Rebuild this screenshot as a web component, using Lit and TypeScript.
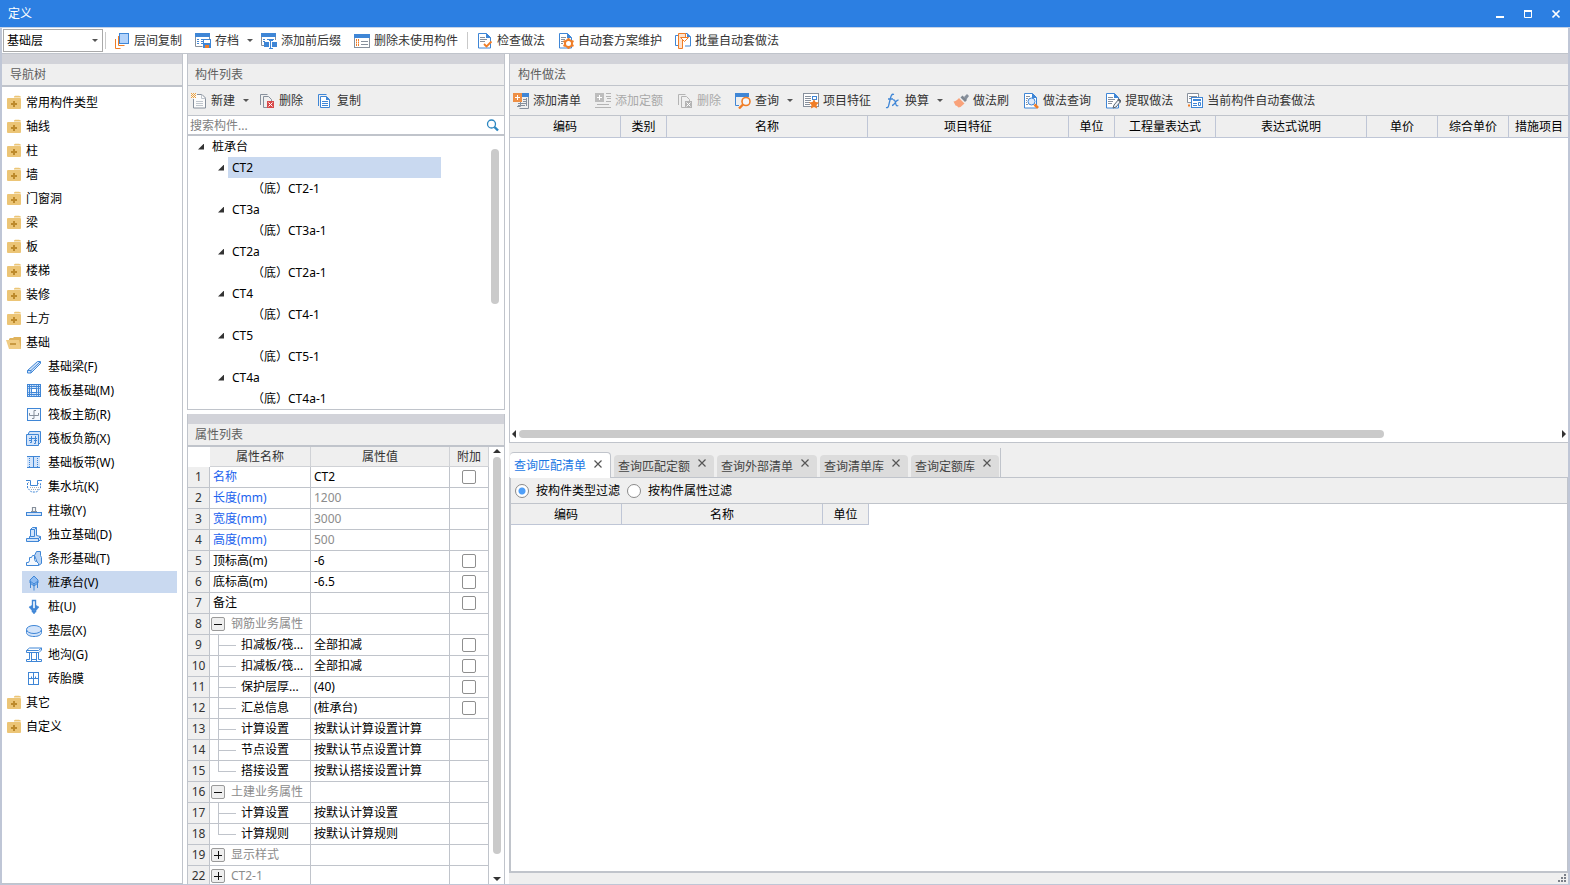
import { LitElement, html, css, svg, nothing, SVGTemplateResult } from "lit";
import { customElement, property, state } from "lit/decorators.js";
import { classMap } from "lit/directives/class-map.js";

const B = "#3f86d6";
const L = "#d3e4fa";
const O = "#f07d26";
const G = "#87909c";

const page = svg`<path d="M1.5 .5h8l4 4v10.500h-12z" fill="#fff" stroke=${B}/><path d="M9 0l5 5h-5z" fill=${B}/>`;

const ICONS: Record<string, SVGTemplateResult> = {
  layers: svg`<path d="M1.500 6v9.500h5M4.500 3v9.500h6" fill="none" stroke=${O}/><rect x="5.500" y="0.500" width="9" height="10" fill="#b3d3fb" stroke=${B}/>`,
  archive: svg`<path d="M.5 1v12.500h7M14.500 1v5" fill="none" stroke=${G}/><rect x="0" y="0" width="15" height="4" fill=${B}/><path d="M2 6.500h2M6 6.500h7M2 8.500h2M6 8.500h2M2 10.500h2M6 10.500h2" stroke=${B}/><rect x="8" y="6" width="8" height="9" fill=${B}/><rect x="9" y="7" width="6" height="3" fill="#fff"/><rect x="10" y="12" width="4" height="3" fill=${O}/>`,
  affix: svg`<path d="M.5 1v11.500h3M14.500 1v6" fill="none" stroke=${G}/><rect x="0" y="0" width="15" height="4" fill=${B}/><path d="M2 6.500h2M6 6.500h7M2 8.500h2" stroke=${B}/><rect x="3" y="9" width="5" height="5" fill=${B}/><rect x="11" y="9" width="5" height="5" fill=${B}/><path d="M8 7.500h4M9.500 7v8M8 15.500h4" stroke=${B}/>`,
  unused: svg`<rect x=".5" y="1.500" width="15" height="13" fill="#fff" stroke=${G}/><rect x="0" y="1" width="16" height="4" fill=${B}/><path d="M2 7h3M2 9.500h3M2 12h3" stroke=${O} stroke-dasharray="1 1" stroke-width="2"/><path d="M7 8.500h7M7 11.500h7" stroke=${G}/>`,
  check: svg`${page}<path d="M3 4.500h5M3 6.500h7M3 8.500h5" stroke=${G}/><path d="M7 11l2.500 2.500 5-5" fill="none" stroke=${O} stroke-width="1.800"/>`,
  plan: svg`${page}<path d="M3 4.500h5M3 6.500h4M3 8.500h3M3 10.500h2" stroke=${G}/><circle cx="10.500" cy="10.500" r="3.500" fill="#fff" stroke=${O} stroke-width="2"/><path d="M10.500 5v2M10.500 14v2M5.500 8l2 1M13.500 12l2 1M15.500 8l-2 1M7.500 12l-2 1" stroke=${O} stroke-width="2"/>`,
  batch: svg`<path d="M3 2.500H.5v10H3M8 .5h4l3.500 3.500v9H10" fill="#fff" stroke=${B}/><path d="M12 0l4 4h-4z" fill=${B}/><path d="M3.500 15.500V.5h7v4h-3v11z" fill="#fde3cf" stroke=${O}/><path d="M5.500 4.500h8l-4 4z" fill="#fff" stroke=${O}/>`,
  create: svg`<path d="M6 1.500h5l3.500 3.500v10h-12V6" fill="#fbfbfb" stroke=${G}/><path d="M10.500 1.500v4h4M5 8.500h7M5 10.500h7M5 12.500h7" fill="none" stroke="#bfc5cc"/><path d="M0 .5h5M0 2.500h5M0 4.500h5" stroke="#f0a13a" stroke-dasharray="1 1"/><path d="M1 1.500h4M1 3.500h4" stroke="#f0a13a" stroke-dasharray="1 1"/>`,
  remove: svg`<path d="M1.500 12V1.500h7M4.500 14.500v-11h5l3 3V8M4.500 14.500H8" fill="none" stroke=${G}/><rect x="8" y="8" width="7" height="7" fill="#d84a4a"/><path d="M9.500 9.500l4 4M13.500 9.500l-4 4" stroke="#fff"/>`,
  removeOff: svg`<path d="M1.500 12V1.500h7M4.500 14.500v-11h5l3 3V8M4.500 14.500H8" fill="none" stroke="#b4b4b4"/><rect x="8" y="8" width="7" height="7" fill="#b4b4b4"/><path d="M9.500 9.500l4 4M13.500 9.500l-4 4" stroke="#fff"/>`,
  copy: svg`<path d="M1.500 13V1.500h8" fill="none" stroke=${B}/><path d="M3.500 3.500h6l3 3v8h-9z" fill="#fff" stroke=${B}/><path d="M9 3l4 4h-4zM5 8h6v1H5zM5 10h6v1H5zM5 12h6v1H5z" fill=${B}/>`,
  addList: svg`<path d="M7.500 2v11.500H4M15.500 4v11.500H6.500" fill="none" stroke=${G}/><rect x="9" y="0" width="7" height="4" fill=${B}/><path d="M10 6.500h4M10 8.500h4M5 10.500h9M5 12.500h7" stroke=${G}/><path d="M13.500 5v8" stroke=${G}/><rect x="0" y="0" width="9" height="9" fill="#ee8f45"/><path d="M4.500 2v5M2 4.500h5" stroke="#fff"/>`,
  addQuota: svg`<rect x="0" y="0" width="9" height="9" fill="#bdbdbd"/><path d="M4.500 2v5M2 4.500h5" stroke="#fff"/><path d="M11 .5h5M11 3.500h5M12 5.500h4M11 8.500h5M2 11.500h12M0 14.500h16" stroke="#b4b4b4"/>`,
  query: svg`<path d="M.5 3v9.500H4" fill="none" stroke=${B}/><rect x="0" y="0" width="14" height="4" fill=${B}/><circle cx="11" cy="8.500" r="4" fill="#f5f8fc" stroke=${O} stroke-width="1.600"/><path d="M8 11.500L4 15.500" stroke=${O} stroke-width="2.400"/>`,
  feature: svg`<rect x=".5" y=".5" width="15" height="13" fill="#fff" stroke=${G}/><path d="M2 3.500h6M2 5.500h6M2 7.500h6M2 9.500h5M2 11.500h5" stroke=${G}/><rect x="9.500" y="3.500" width="4" height="3" fill="none" stroke=${B}/><path d="M11 6l1.500 3 3.500.5-2.500 2.500.6 3.500L11 14l-3.100 1.500.6-3.500L6 9.500 9.500 9z" fill=${O}/>`,
  fx: svg`<path d="M9 1.500C6.500.5 6 3 5.500 5L3.800 12C3.400 14.500 2.300 15 1 14.500M3 6h5M8 7c2-.5 2 1 2.500 3s.8 3.500 2.800 2.500M13.500 7c-2 0-2.500 1.500-3.500 3s-1.500 2.500-3 2.500" fill="none" stroke=${B} stroke-width="1.300"/>`,
  brush: svg`<path d="M11 4l3-3 2 2-3 4z" fill=${G}/><path d="M7.500 4.500l2-2 4.500 4.500-2 2z" fill="#7f8791"/><path d="M6 5l5.500 5.500-4 3.500-2 .500-1.500-1.500-1.500-.5-2-4c2 0 3.500-1.500 5.500-3.500z" fill="#f9a27a"/>`,
  methodQuery: svg`${page}<path d="M3 3.500h4M3 5.500h2M3 7.500h1M3 9.500h1M3 11.500h2" stroke=${G}/><circle cx="8.500" cy="8.500" r="3.500" fill="#dceafb" stroke=${B}/><path d="M11.500 11.500l3.500 3.500" stroke=${O} stroke-width="2.600"/>`,
  extract: svg`${page}<path d="M3 4.500h5M3 6.500h7M3 8.500h5M3 10.500h4" stroke=${G}/><path d="M8 15l1-3 5-6 2 2-5 6z" fill="#eef3f8" stroke="#5c6671"/><path d="M13 6l3 3" stroke="#5c6671" stroke-width="2"/>`,
  current: svg`<path d="M4 9.500H.5v-9h11V4" fill="#fff" stroke=${G}/><path d="M2 3.500h8M2 5.500h2" stroke=${G}/><rect x="4.500" y="4.500" width="11" height="10" fill="#fff" stroke=${B}/><path d="M6 7h8" stroke=${B} stroke-width="2"/><path d="M6 10.500h4M6 12.500h4M11.500 9.500h2v3h-2z" fill="none" stroke=${B}/><path d="M2 11v3M1 12.500h2" stroke=${O}/>`,
  folder: svg`<path d="M8 2.500V1.500L9 .8h4l1.800.7v1z" fill="#ecc576"/><rect x="1" y="3" width="14" height="11" rx="1" fill="#ecc576"/><path d="M8 6v6M5 9h6" stroke="#bd8a2c" stroke-width="2"/>`,
  folderOpen: svg`<path d="M3 13V4l1-1h3l1-1h7v12z" fill="#e0b35c"/><path d="M0 5h13l2 9H3z" fill="#f0cc83"/><path d="M4 9h6" stroke="#bd8a2c" stroke-width="1.500"/>`,
  beam: svg`<path d="M1.500 11.500l10-9h3v2L5 14H1.500z" fill=${L} stroke=${B}/><path d="M1.500 11.500h3.500v2.500M5 11.500l9-8.500" fill="none" stroke=${B}/>`,
  raft: svg`<rect x="1.500" y="1.500" width="13" height="12" fill=${L} stroke=${B}/><rect x="5.500" y="5.500" width="5" height="4" fill="#fff" stroke=${B}/><path d="M3.500 2v11M12.500 2v11M2 3.500h12M2 11.500h12" stroke=${B}/><path d="M5.500 2v3M8 2v2M10.500 2v3M5.500 10v3M8 11v2M10.500 10v3M2 5.500h3M2 9.500h3M11 5.500h3M11 9.500h3" stroke=${B} opacity=".7"/>`,
  raftMain: svg`<rect x="1.500" y="1.500" width="13" height="12" fill="#f4f8fd" stroke=${B}/><path d="M3.500 6v2.500h9V6M10 3.500H8V11.500H6" fill="none" stroke=${G}/>`,
  raftNeg: svg`<path d="M.5 3.500h12v11h-12zM2 3.500l1.500-3h11v11l-2 2" fill=${L} stroke=${B}/><path d="M5.500 5v6.500H4M9.500 5v7.500H8M3 7.500h8M3 9.500h3M8 9.500h3" fill="none" stroke=${B}/>`,
  strip: svg`<rect x="1" y="2" width="13" height="10" fill=${L}/><path d="M1 1.500h5M1 12.500h5M9 1.500h5M9 12.500h5M7.500 2v10M6 1.500h3M6 12.500h3" stroke=${B}/><path d="M3.500 3v9M11.500 3v9" stroke=${B} stroke-dasharray="1 1"/>`,
  pit: svg`<path d="M0 1.500h4.500v5h7v-5H16" fill="none" stroke=${B}/><path d="M1.500 4v5l4 4h5l4-4V4" fill="none" stroke=${B} stroke-dasharray="2 1"/><path d="M2 3.500h2M12 4.500h2M4 8.500h9M5 10.500h7" stroke="#aab1ba" stroke-dasharray="1 1"/>`,
  pier: svg`<path d="M6.500 8v-3.500h3V8M5 8.500h6" fill="none" stroke=${G} stroke-width="1.200"/><rect x=".5" y="9.500" width="15" height="3" fill=${L} stroke=${B}/>`,
  footing: svg`<path d="M.5 11.500h12v3H.5zM3.500 11.500v-2h1v-7l2-2h4v8l4 1v3l-2 2v-3z" fill=${L} stroke=${B}/><path d="M4.500 9.500v-7h4v7zM8.500 2.500l2-2M12.500 11.500l2-2" fill="none" stroke=${B}/>`,
  stripFooting: svg`<path d="M8.500 4.500l2-4h4v4l1 2v6l-3 2z" fill="#b9d3f3" stroke=${B}/><path d="M.5 14.500v-3h2l1-2v-3h2l1-2h2v4l1 2h1l2 2v2z" fill="#f4f8fd" stroke=${B}/>`,
  pileCap: svg`<path d="M8 1l4 4v3l-4 3-4-3V5z" fill="#8fbcf2" stroke=${B}/><path d="M8 8v7.500M4.500 7v6M11.500 7v6M4 6l4 3 4-3" fill="none" stroke=${B}/>`,
  pile: svg`<path d="M6.500 1.500h3v11h-3z" fill="#fff" stroke=${B} stroke-width="1.400"/><path d="M3 8l3-1.500v3h4v-3L13 8l-3 3.500h-4zM6 12h4l-2 3z" fill=${B} stroke=${B} stroke-width=".6"/>`,
  cushion: svg`<path d="M.5 6.500v3c0 2.500 3.500 4 7.500 4s7.500-1.500 7.500-4v-3" fill=${L} stroke=${B}/><ellipse cx="8" cy="6.500" rx="7.500" ry="4" fill=${L} stroke=${B}/>`,
  trench: svg`<path d="M.5 5.500v-2l3-2.500h12v2l-2.500 2.500zM.5 3.500h12l3-2.500" fill="#fff" stroke=${B}/><path d="M3.500 5.500v7h-3v2h5v-9M10.500 5.500v9h5v-2h-3v-7M5 12.500h6M5 14.500h6" fill="none" stroke=${B}/>`,
  brick: svg`<rect x="2.500" y="1.500" width="10" height="12" fill="#fff" stroke=${B}/><path d="M7.500 2v11M3 7.500h9" stroke=${B}/><path d="M5.500 7V5.500M9.500 7V5.500" stroke=${B}/>`,
  search: svg`<circle cx="6.500" cy="7" r="4" fill="none" stroke="#2b86c0" stroke-width="1.300"/><path d="M9.500 10l3.500 3.500" stroke="#2b86c0" stroke-width="2.400"/>`,
  minimize: svg`<path d="M4 11h8" stroke="#fff" stroke-width="2"/>`,
  maximize: svg`<path d="M4.500 5v6.500h7V5" fill="none" stroke="#fff"/><path d="M4 5h8" stroke="#fff" stroke-width="2"/>`,
  close: svg`<path d="M4.500 4.500l7 7M11.500 4.500l-7 7" stroke="#fff" stroke-width="1.700"/>`,
};

@customElement("ui-icon")
class UiIcon extends LitElement {
  @property() name = "";
  static styles = css`
    :host { display: block; flex: none; width: 16px; height: 16px; }
    svg { display: block; width: 16px; height: 16px; }
  `;
  render() {
    return html`<svg viewBox="0 0 16 16" aria-hidden="true">${ICONS[this.name]}</svg>`;
  }
}

type Tool = { icon: string; text: string; menu?: boolean; off?: boolean; sep?: boolean };

const MAIN_TOOLS: Tool[] = [
  { icon: "layers", text: "层间复制" },
  { icon: "archive", text: "存档", menu: true },
  { icon: "affix", text: "添加前后缀" },
  { icon: "unused", text: "删除未使用构件" },
  { icon: "check", text: "检查做法", sep: true },
  { icon: "plan", text: "自动套方案维护" },
  { icon: "batch", text: "批量自动套做法" },
];
const LIST_TOOLS: Tool[] = [
  { icon: "create", text: "新建", menu: true },
  { icon: "remove", text: "删除" },
  { icon: "copy", text: "复制" },
];
const METHOD_TOOLS: Tool[] = [
  { icon: "addList", text: "添加清单" },
  { icon: "addQuota", text: "添加定额", off: true },
  { icon: "removeOff", text: "删除", off: true },
  { icon: "query", text: "查询", menu: true },
  { icon: "feature", text: "项目特征" },
  { icon: "fx", text: "换算", menu: true },
  { icon: "brush", text: "做法刷" },
  { icon: "methodQuery", text: "做法查询" },
  { icon: "extract", text: "提取做法" },
  { icon: "current", text: "当前构件自动套做法" },
];

const NAV_TOP = ["常用构件类型", "轴线", "柱", "墙", "门窗洞", "梁", "板", "楼梯", "装修", "土方"];
const NAV_SUB: [string, string][] = [
  ["beam", "基础梁(F)"],
  ["raft", "筏板基础(M)"],
  ["raftMain", "筏板主筋(R)"],
  ["raftNeg", "筏板负筋(X)"],
  ["strip", "基础板带(W)"],
  ["pit", "集水坑(K)"],
  ["pier", "柱墩(Y)"],
  ["footing", "独立基础(D)"],
  ["stripFooting", "条形基础(T)"],
  ["pileCap", "桩承台(V)"],
  ["pile", "桩(U)"],
  ["cushion", "垫层(X)"],
  ["trench", "地沟(G)"],
  ["brick", "砖胎膜"],
];

const PARTS = ["CT2", "CT3a", "CT2a", "CT4", "CT5", "CT4a"];

type Prop = { n: number; name: string; value?: string; kind?: "key" | "open" | "shut" | "child" | "last"; check?: boolean; dim?: boolean };
const PROPS: Prop[] = [
  { n: 1, name: "名称", value: "CT2", kind: "key", check: true },
  { n: 2, name: "长度(mm)", value: "1200", kind: "key", dim: true },
  { n: 3, name: "宽度(mm)", value: "3000", kind: "key", dim: true },
  { n: 4, name: "高度(mm)", value: "500", kind: "key", dim: true },
  { n: 5, name: "顶标高(m)", value: "-6", check: true },
  { n: 6, name: "底标高(m)", value: "-6.5", check: true },
  { n: 7, name: "备注", check: true },
  { n: 8, name: "钢筋业务属性", kind: "open" },
  { n: 9, name: "扣减板/筏...", value: "全部扣减", kind: "child", check: true },
  { n: 10, name: "扣减板/筏...", value: "全部扣减", kind: "child", check: true },
  { n: 11, name: "保护层厚...", value: "(40)", kind: "child", check: true },
  { n: 12, name: "汇总信息", value: "(桩承台)", kind: "child", check: true },
  { n: 13, name: "计算设置", value: "按默认计算设置计算", kind: "child" },
  { n: 14, name: "节点设置", value: "按默认节点设置计算", kind: "child" },
  { n: 15, name: "搭接设置", value: "按默认搭接设置计算", kind: "last" },
  { n: 16, name: "土建业务属性", kind: "open" },
  { n: 17, name: "计算设置", value: "按默认计算设置", kind: "child" },
  { n: 18, name: "计算规则", value: "按默认计算规则", kind: "last" },
  { n: 19, name: "显示样式", kind: "shut" },
  { n: 22, name: "CT2-1", kind: "shut" },
];

const METHOD_COLS: [string, number][] = [
  ["编码", 111], ["类别", 46], ["名称", 201], ["项目特征", 201], ["单位", 46],
  ["工程量表达式", 101], ["表达式说明", 151], ["单价", 71], ["综合单价", 71], ["措施项目", 60],
];
const QUERY_COLS: [string, number][] = [["编码", 111], ["名称", 201], ["单位", 46]];
const TABS = ["查询匹配清单", "查询匹配定额", "查询外部清单", "查询清单库", "查询定额库"];

@customElement("app-root")
class AppRoot extends LitElement {
  @state() private nav = "桩承台(V)";
  @state() private part = "CT2";
  @state() private tab = 0;

  static styles = css`
    :host {
      --line: #c0c4cb;
      --frame: #bfc6d6;
      --panel: #efefef;
      --sel: #c9d9f0;
      display: flex;
      flex-direction: column;
      height: 100vh;
      overflow: hidden;
      box-sizing: border-box;
      background: #fff;
      color: #000;
      font: 12px/20px "Noto Sans", "Noto Sans CJK SC", sans-serif;
      cursor: default;
    }
    *, *::before, *::after { box-sizing: border-box; }
    button, input, select { font: inherit; color: inherit; margin: 0; }
    button { background: none; border: 0; padding: 0; white-space: nowrap; }
    ul { list-style: none; margin: 0; padding: 0; }

    .title { display: flex; align-items: center; height: 28px; flex: none; padding: 0 6px 0 8px; background: #2c7fe2; color: #fff; border-bottom: 1px solid #c6d3e6; }
    .title h1 { flex: 1; margin: 0; font-size: 12px; font-weight: 400; }
    .winbtns { display: flex; gap: 12px; }
    .winbtns button { width: 16px; }

    .frame { flex: 1; min-height: 0; display: flex; flex-direction: column; border: solid var(--frame); border-width: 0 2px 1px 2px; }
    .tools { display: flex; align-items: center; gap: 4px; flex: none; overflow: hidden; }
    .tools.main { height: 26px; gap: 3px; padding-left: 1px; border-bottom: 1px solid var(--line); }
    .tools.sub { height: 30px; background: var(--panel); border-bottom: 1px solid var(--line); }
    .tool { display: flex; align-items: center; gap: 4px; padding: 0 5px; height: 20px; color: #333; flex: none; }
    .tool:disabled { color: #a9a9a9; }
    .tools.sub .tool:first-child { padding-left: 3px; }
    .caret { width: 0; height: 0; margin: 0 -4px 0 4px; border: 3px solid transparent; border-top-color: #555; border-bottom-width: 0; }
    .tools.main .tool .caret { margin-right: -5px; }
    .sep { width: 1px; height: 17px; margin: 0 1px; background: #c9c9c9; }
    .floor { display: flex; align-items: center; gap: 2px; position: relative; }
    .floor .sep { margin: 0; }
    .floor select { appearance: none; width: 100px; height: 23px; padding: 0 3px; background: #fff; border: 1px solid #a9a9a9; border-radius: 0; }
    .floor .caret { position: absolute; left: 89px; top: 10px; margin: 0; }

    .work { flex: 1; min-height: 0; display: grid; grid-template-columns: 181px 318px minmax(0, 1fr); column-gap: 4px; }
    .col { display: grid; min-height: 0; min-width: 0; }
    .col.mid { grid-template-rows: minmax(0, 356fr) minmax(0, 470fr); row-gap: 4px; }
    .col.right { grid-template-rows: minmax(0, 389fr) minmax(0, 441fr); }
    .panel { display: flex; flex-direction: column; min-height: 0; min-width: 0; border: 0 solid var(--line); }
    .panel.nav { border-width: 0 1px 1px 0; }
    .panel.parts { border-width: 0 1px 1px 1px; }
    .panel.props { border-width: 0 1px 0 1px; }
    .panel.method { border-width: 0 0 1px 1px; }
    .panel.query { background: var(--panel); }
    .panel h2 { flex: none; margin: 0; height: 32px; padding: 0 8px; border-top: 10px solid #d2d3d9; border-bottom: 1px solid var(--line); background: var(--panel); color: #5e5e5e; font-size: 12px; font-weight: 400; line-height: 22px; }
    .panel h2.thick { height: 33px; border-bottom-width: 2px; }
    .panel.parts h2, .panel.props h2 { padding-left: 7px; }

    .navlist { padding-top: 3px; }
    .navlist li { height: 24px; display: flex; align-items: center; }
    .navlist button { display: flex; align-items: center; height: 22px; gap: 4px; padding: 1px 0 0 4px; width: 100%; text-align: left; }
    .navlist .leaf { gap: 6px; margin: 0 5px 0 20px; }
    .navlist .on { background: var(--sel); }

    .search { display: flex; align-items: center; flex: none; height: 20px; border-bottom: 2px solid var(--line); padding: 0 3px 0 2px; }
    .search input { flex: 1; min-width: 0; border: 0; outline: 0; padding: 1px 0 0; height: 18px; background: none; }
    .search input::placeholder { color: #808080; opacity: 1; }
    .treebox { flex: 1; min-height: 0; display: flex; overflow: hidden; }
    .tree { flex: 1; padding-right: 50px; }
    .row { display: flex; align-items: center; height: 21px; }
    .row button { flex: 1; height: 21px; text-align: left; padding-left: 4px; }
    .row.l1 { padding-left: 10px; }
    .row.l2 { padding-left: 30px; }
    .row.l3 { padding-left: 60px; }
    .row.on button { background: var(--sel); }
    .tri { width: 6px; height: 6px; margin-right: 4px; background: #333; clip-path: polygon(100% 0, 100% 100%, 0 100%); }
    .vbar { width: 8px; margin: 13px 5px 0 0; height: 155px; border-radius: 4px; background: #cacaca; }

    .grid { flex: 1; min-height: 0; display: flex; overflow: hidden; }
    .fill { flex: 1; min-width: 0; overflow: hidden; }
    table { border-collapse: separate; border-spacing: 0; table-layout: fixed; }
    th, td { padding: 0; font-weight: 400; border: 0 solid var(--line); border-width: 0 1px 1px 0; overflow: hidden; white-space: nowrap; }
    .ptable { width: 100%; }
    .ptable thead th { height: 20px; background: var(--panel); color: #333; line-height: 19px; border-color: #d0d2d6; }
    .ptable thead .corner { background: #fff; border: 0; }
    .ptable tbody th { height: 21px; background: var(--panel); color: #333; }
    .ptable td { height: 21px; line-height: 20px; padding-left: 3px; }
    .ptable .name { padding-left: 0; }
    .name div { display: flex; align-items: center; height: 20px; padding-left: 3px; }
    .name.key { color: #1c63ee; }
    .name.group { color: #8c8c8c; }
    .name.group div { padding-left: 1px; }
    .dim { color: #8c8c8c; }
    .ptable .mark { padding: 0 1px 0 0; }
    .mark input { display: block; appearance: none; width: 14px; height: 14px; margin: 0 auto; border: 1px solid #8f8f8f; border-radius: 2px; background: #fff; }
    .exp { width: 14px; height: 14px; margin-right: 6px; border: 1px solid #9a9a9a; border-radius: 2px; background: linear-gradient(#111, #111) center / 8px 1px no-repeat, #efefef; }
    .exp.shut { background: linear-gradient(#111, #111) center / 8px 1px no-repeat, linear-gradient(#111, #111) center / 1px 8px no-repeat, #efefef; }
    .branch { width: 23px; height: 20px; margin-left: 5px; background: linear-gradient(var(--line), var(--line)) 0 0 / 1px 100% no-repeat, linear-gradient(var(--line), var(--line)) 0 10px / 18px 1px no-repeat; }
    .branch.last { background-size: 1px 10px, 18px 1px; }
    .vscroll { width: 15px; flex: none; display: flex; flex-direction: column; align-items: center; gap: 4px; padding: 2px 0 3px 1px; }
    .vscroll i, .hscroll i { flex: none; border: 4px solid transparent; }
    .vscroll .up { border-top: 0; border-bottom-color: #333; }
    .vscroll .thumb { width: 8px; flex: 1; border-radius: 4px; background: #cacaca; margin-bottom: 19px; }
    .vscroll .down { border-bottom: 0; border-top-color: #333; }

    .dtable th { height: 20px; background: var(--panel); line-height: 19px; padding-top: 1px; border-color: var(--frame); }
    .dtable.wide th { height: 21px; line-height: 20px; }
    .dtable.wide { width: 100%; }
    .dtable.wide th:last-child { border-right: 0; }
    .hscroll { flex: none; display: flex; align-items: center; height: 16px; padding: 0 2px; gap: 3px; }
    .hscroll .left { border-left: 0; border-right-color: #333; }
    .hscroll .right { border-right: 0; border-left-color: #333; }
    .hscroll .track { flex: 1; }
    .hscroll .thumb { width: 83.2%; height: 8px; border-radius: 4px; background: #cacaca; }

    .tabs { flex: none; display: flex; height: 35px; padding-top: 5px; padding-left: 1px; border-bottom: 1px solid var(--line); }
    .tabset { display: flex; align-items: flex-end; gap: 3px; padding-right: 1px; border-right: 1px solid var(--line); }
    .tab { display: flex; align-items: center; gap: 8px; height: 22px; padding: 1px 8px 0 4px; background: #dcdcdc; color: #444; border-radius: 4px 4px 0 0; }
    .tab.on { height: 26px; margin-bottom: -1px; background: #fff; color: #1b78e4; border: 1px solid var(--line); border-width: 1px 1px 0 0; }
    .tab .x { width: 8px; height: 12px; color: #555; align-self: flex-start; margin-top: 1px; }
    .tab.on .x { margin-top: 4px; }
    .x svg { display: block; width: 8px; height: 12px; }
    .pane { flex: 1; min-height: 0; display: flex; flex-direction: column; background: #fff; border: solid var(--line); border-width: 0 1px 2px 2px; }
    .filter { flex: none; display: flex; align-items: center; gap: 7px; height: 26px; padding-left: 4px; background: var(--panel); border-bottom: 1px solid var(--line); }
    .filter label { display: flex; align-items: center; gap: 7px; }
    .filter input { appearance: none; width: 14px; height: 14px; border: 1px solid #8a8a8a; border-radius: 50%; background: #fff; }
    .filter input:checked { background: radial-gradient(circle, #4f9ff8 0 3px, #fff 4px); }
    .status { flex: none; display: flex; justify-content: flex-end; align-items: flex-end; height: 11px; padding: 0 1px 1px; }
    .status svg { display: block; width: 9px; height: 9px; }
  `;

  private tool(t: Tool) {
    return html`${t.sep ? html`<span class="sep"></span>` : nothing}
      <button class="tool" ?disabled=${!!t.off}>
        <ui-icon name=${t.icon}></ui-icon><span>${t.text}</span>${t.menu ? html`<i class="caret"></i>` : nothing}
      </button>`;
  }

  private folder(text: string, icon = "folder") {
    return html`<li><button><ui-icon name=${icon}></ui-icon>${text}</button></li>`;
  }

  private propRow(p: Prop) {
    const group = p.kind === "open" || p.kind === "shut";
    const child = p.kind === "child" || p.kind === "last";
    return html`<tr>
      <th scope="row">${p.n}</th>
      <td class=${classMap({ name: true, key: p.kind === "key", group })}><div>
        ${group ? html`<button class=${classMap({ exp: true, shut: p.kind === "shut" })} aria-label=${p.kind === "open" ? "收起" : "展开"}></button>` : nothing}
        ${child ? html`<i class=${classMap({ branch: true, last: p.kind === "last" })}></i>` : nothing}
        <span>${p.name}</span></div></td>
      <td class=${classMap({ dim: !!p.dim })}>${p.value ?? nothing}</td>
      <td class="mark">${p.check ? html`<input type="checkbox" aria-label=${p.name} />` : nothing}</td>
    </tr>`;
  }

  private head(cols: [string, number][], wide: boolean) {
    const total = cols.reduce((s, c) => s + c[1], 0);
    return html`<table class=${classMap({ dtable: true, wide })} style=${wide ? "" : `width:${total}px`}>
      <colgroup>${cols.map((c) => html`<col style="width:${c[1]}px" />`)}</colgroup>
      <thead><tr>${cols.map((c) => html`<th scope="col">${c[0]}</th>`)}</tr></thead>
    </table>`;
  }

  render() {
    return html`
      <header class="title">
        <h1>定义</h1>
        <div class="winbtns">
          <button aria-label="最小化"><ui-icon name="minimize"></ui-icon></button>
          <button aria-label="最大化"><ui-icon name="maximize"></ui-icon></button>
          <button aria-label="关闭"><ui-icon name="close"></ui-icon></button>
        </div>
      </header>
      <div class="frame">
        <div class="tools main">
          <div class="floor">
            <select aria-label="楼层"><option>基础层</option></select><i class="caret"></i><span class="sep"></span>
          </div>
          ${MAIN_TOOLS.map((t) => this.tool(t))}
        </div>
        <main class="work">
          <nav class="panel nav">
            <h2 class="thick">导航树</h2>
            <ul class="navlist">
              ${NAV_TOP.map((t) => this.folder(t))}
              ${this.folder("基础", "folderOpen")}
              ${NAV_SUB.map(([icon, text]) => html`<li><button class=${classMap({ leaf: true, on: this.nav === text })}
                @click=${() => (this.nav = text)}><ui-icon name=${icon}></ui-icon>${text}</button></li>`)}
              ${this.folder("其它")} ${this.folder("自定义")}
            </ul>
          </nav>

          <div class="col mid">
            <section class="panel parts">
              <h2>构件列表</h2>
              <div class="tools sub">${LIST_TOOLS.map((t) => this.tool(t))}</div>
              <div class="search"><input aria-label="搜索构件" placeholder="搜索构件..." /><ui-icon name="search"></ui-icon></div>
              <div class="treebox">
                <div class="tree">
                  <div class="row l1"><i class="tri"></i><button>桩承台</button></div>
                  ${PARTS.map((p) => html`
                    <div class=${classMap({ row: true, l2: true, on: this.part === p })}><i class="tri"></i><button @click=${() => (this.part = p)}>${p}</button></div>
                    <div class="row l3"><button>（底）${p}-1</button></div>`)}
                </div>
                <div class="vbar"></div>
              </div>
            </section>
            <section class="panel props">
              <h2 class="thick">属性列表</h2>
              <div class="grid">
                <div class="fill">
                  <table class="ptable">
                    <colgroup><col style="width:22px" /><col style="width:101px" /><col style="width:139px" /><col style="width:39px" /></colgroup>
                    <thead><tr><th class="corner"></th><th scope="col">属性名称</th><th scope="col">属性值</th><th scope="col">附加</th></tr></thead>
                    <tbody>${PROPS.map((p) => this.propRow(p))}</tbody>
                  </table>
                </div>
                <div class="vscroll"><i class="up"></i><span class="thumb"></span><i class="down"></i></div>
              </div>
            </section>
          </div>

          <div class="col right">
            <section class="panel method">
              <h2>构件做法</h2>
              <div class="tools sub">${METHOD_TOOLS.map((t) => this.tool(t))}</div>
              <div class="fill">${this.head(METHOD_COLS, true)}</div>
              <div class="hscroll"><i class="left"></i><div class="track"><div class="thumb"></div></div><i class="right"></i></div>
            </section>
            <section class="panel query">
              <div class="tabs"><div class="tabset">
                ${TABS.map((t, i) => html`<div class=${classMap({ tab: true, on: this.tab === i })}>
                  <button @click=${() => (this.tab = i)}>${t}</button>
                  <button class="x" aria-label="关闭${t}"><svg viewBox="0 0 8 12"><path d="M.5 2.500l7 7M7.500 2.500l-7 7" stroke="currentColor" stroke-width="1.200" /></svg></button>
                </div>`)}
              </div></div>
              <div class="pane">
                <div class="filter">
                  <label><input type="radio" name="filter" checked />按构件类型过滤</label>
                  <label><input type="radio" name="filter" />按构件属性过滤</label>
                </div>
                <div class="fill">${this.head(QUERY_COLS, false)}</div>
              </div>
              <div class="status"><svg viewBox="0 0 9 9" fill="#7a7f88"><path d="M6 0h2v2H6zM3 3h2v2H3zM6 3h2v2H6zM0 6h2v2H0zM3 6h2v2H3zM6 6h2v2H6z" /></svg></div>
            </section>
          </div>
        </main>
      </div>
    `;
  }
}
